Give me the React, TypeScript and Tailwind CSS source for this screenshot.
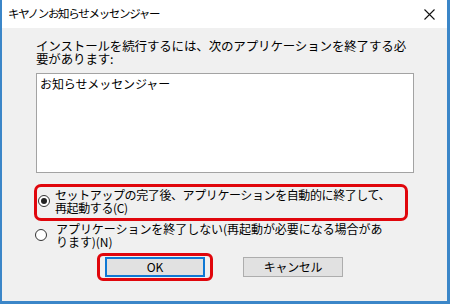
import React from "react";

const jp = { fontFamily: '"Noto Sans CJK JP", "Noto Sans", sans-serif' };

function Radio({ checked }: { checked?: boolean }) {
  return (
    <span className="flex h-[12px] w-[12px] shrink-0 items-center justify-center rounded-full border border-[#333] bg-white">
      {checked && <span className="h-[6px] w-[6px] rounded-full bg-[#222]" />}
    </span>
  );
}

export default function App() {
  return (
    <div
      className="flex h-[304px] w-[450px] flex-col overflow-hidden border-b-[3px] border-l-[2px] border-r-[3px] border-[#3b86c8] bg-[#f0f0f0] text-black"
      style={jp}
    >
      {/* title bar */}
      <div className="flex h-[28px] shrink-0 items-center justify-between bg-white pl-[6px] pr-[12px]">
        <span className="text-[11.5px] tracking-[-1.3px] leading-none">キヤノンお知らせメッセンジャー</span>
        <svg width="11" height="11" viewBox="0 0 11 11" className="mt-[1px]">
          <path d="M0.5 0.5 L10.5 10.5 M10.5 0.5 L0.5 10.5" stroke="#111" strokeWidth="1.1" />
        </svg>
      </div>

      <div className="flex flex-1 flex-col pl-[32px] pt-[12px]">
        <p className="pl-[2px] text-[12.5px] leading-[12.5px] tracking-[-0.15px] whitespace-nowrap">
          インストールを続行するには、次のアプリケーションを終了する必
          <br />
          要があります:
        </p>

        <div className="mt-[8px] ml-[2px] h-[100px] w-[378px] border border-[#a3a3a3] bg-white px-[3px] pt-[4px]">
          <div className="text-[12px] leading-[12px] tracking-[-0.1px]">お知らせメッセンジャー</div>
        </div>

        <div className="mt-[11px] flex h-[37px] w-[374px] items-center gap-[5px] rounded-[7px] border-[3px] border-[#e0060c] pl-[1px]">
          <span className="-mt-[3px]">
            <Radio checked />
          </span>
          <span className="-mt-[2px] text-[12px] leading-[12.5px] tracking-[-0.4px] whitespace-nowrap">
            セットアップの完了後、アプリケーションを自動的に終了して、
            <br />
            再起動する(C)
          </span>
        </div>

        <div className="mt-[2px] flex items-center gap-[9px] pl-[1px]">
          <span className="-mt-[1px]">
            <Radio />
          </span>
          <span className="text-[12px] leading-[12.5px] tracking-[-0.05px] whitespace-nowrap">
            アプリケーションを終了しない(再起動が必要になる場合があ
            <br />
            ります)(N)
          </span>
        </div>

        <div className="mt-[5px] flex items-center">
          <div className="ml-[63px] flex h-[28px] w-[116px] items-center justify-center rounded-[6px] border-[3px] border-[#e0060c]">
            <button className="flex h-[20px] w-[100px] items-center justify-center border-2 border-[#0f78d4] bg-[#e1e1e1] text-[12px] leading-none">
              OK
            </button>
          </div>
          <button className="ml-[30px] flex h-[20px] w-[100px] items-center justify-center border border-[#adadad] bg-[#e1e1e1] text-[12px] leading-none tracking-[-0.3px]">
            キャンセル
          </button>
        </div>
      </div>
    </div>
  );
}
